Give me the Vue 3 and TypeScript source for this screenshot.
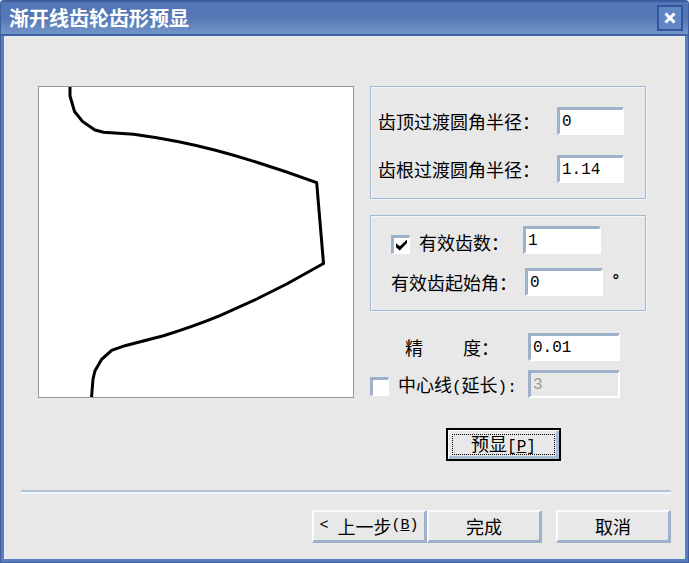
<script setup lang="ts">
import { ref } from 'vue'

const tipRadius = ref('0')
const rootRadius = ref('1.14')
const limitTeeth = ref(true)
const toothCount = ref('1')
const startAngle = ref('0')
const precision = ref('0.01')
const centerLine = ref(false)
const extension = ref('3')
</script>

<template>
  <main class="window">
    <header class="titlebar">
      <h1>渐开线齿轮齿形预显</h1>
      <button type="button" class="close" aria-label="关闭">
        <svg viewBox="0 0 12 12" width="12" height="12" aria-hidden="true">
          <path d="M1.5 1.5 L10.5 10.5 M10.5 1.5 L1.5 10.5" />
        </svg>
      </button>
    </header>

    <div class="body">
      <div class="content">
        <div class="preview">
          <svg viewBox="0 0 314 310" aria-hidden="true">
            <path
              d="M31 -1 V9 L35.5 24.5 L43.5 34.5 L56 43 L64.5 45.3 L94.5 47.3 Q137 53 177.5 63.5 Q226 76.5 277.7 95.7 L279.7 119.7 L284.5 176.5 L247.7 197 L217.7 212 L181 228.7 Q152 240.5 124.5 248.7 L86 258.7 L72.7 263.3 L62.7 272.3 L56 283.7 L54 292 L52.5 311"
            />
          </svg>
        </div>

        <form class="settings" @submit.prevent>
          <section class="group radii">
            <label for="tip">齿顶过渡圆角半径：</label>
            <input id="tip" v-model="tipRadius" type="text" class="field" />
            <label for="root">齿根过渡圆角半径：</label>
            <input id="root" v-model="rootRadius" type="text" class="field" />
          </section>

          <section class="group teeth">
            <div class="row count">
              <input id="limit" v-model="limitTeeth" type="checkbox" class="check" />
              <label for="limit">有效齿数：</label>
              <input v-model="toothCount" type="text" class="field" aria-label="有效齿数" />
            </div>
            <div class="row angle">
              <label for="angle">有效齿起始角：</label>
              <input id="angle" v-model="startAngle" type="text" class="field" />
              <span class="degree">°</span>
            </div>
          </section>

          <section class="options">
            <label for="precision" class="spread"><span>精</span><span>度：</span></label>
            <input id="precision" v-model="precision" type="text" class="field" />
            <div class="row">
              <input id="center" v-model="centerLine" type="checkbox" class="check" />
              <label for="center">中心线<span class="latin">(</span>延长<span class="latin">):</span></label>
            </div>
            <input v-model="extension" type="text" class="field" :disabled="!centerLine" aria-label="延长" />
          </section>

          <button type="button" class="button default">
            <span class="focus">预显<span class="latin">[<u>P</u>]</span></span>
          </button>
        </form>
      </div>

      <footer class="footer">
        <button type="button" class="button"><span class="latin">&lt; </span>上一步<span class="latin">(<u>B</u>)</span></button>
        <button type="button" class="button">完成</button>
        <button type="button" class="button cancel">取消</button>
      </footer>
    </div>
  </main>
</template>

<style>
body {
  background: #dbe9f8;
}
</style>

<style scoped>
* {
  box-sizing: border-box;
}

.window {
  display: flex;
  flex-direction: column;
  min-height: 100vh;
  border: 1px solid #3f5f9f;
  border-top: 2px solid #3c5c9c;
  border-radius: 4px 4px 0 0;
  padding: 0 3px 3px;
  background: #5b7fbd;
  color: #000;
  font: 18px/28px "Noto Sans CJK SC", sans-serif;
}

.titlebar {
  display: flex;
  align-items: center;
  justify-content: space-between;
  height: 34px;
  margin: 0 -3px;
  padding: 0 5px 0 8px;
  border-bottom: 2px solid #4262a4;
  background: linear-gradient(#5076b8, #5578b6 50%, #7296c8);
}

h1 {
  margin: 0;
  color: #fff;
  font-size: 20px;
  font-weight: 700;
  line-height: 28px;
}

.close {
  display: grid;
  place-items: center;
  width: 26px;
  height: 26px;
  padding: 0;
  border: 2px solid #34569c;
  background: #6086c4;
}

.close path {
  fill: none;
  stroke: #fff;
  stroke-width: 3;
}

.body {
  flex: 1;
  display: flex;
  flex-direction: column;
  padding: 49px 13px 15px 16px;
  border: 1px solid #e4ebfb;
  background: #e8e8e8;
}

.content {
  display: grid;
  grid-template-columns: minmax(0, 316fr) minmax(0, 276fr);
  align-items: start;
  gap: 16px;
  padding: 0 25px 0 17px;
}

.preview {
  border: 1px solid #969696;
  background: #fff;
}

.preview svg {
  display: block;
  width: 100%;
}

.preview path {
  fill: none;
  stroke: #000;
  stroke-width: 3;
}

.settings {
  display: flex;
  flex-direction: column;
}

.group {
  border: 1px solid #a3b9d2;
  box-shadow: inset 1px 1px #eef6ff, 1px 1px #eef6ff;
  margin-bottom: 16px;
}

.radii {
  display: grid;
  grid-template-columns: 1fr 67px;
  row-gap: 20px;
  padding: 20px 21px 15px 7px;
}

.teeth {
  display: flex;
  flex-direction: column;
  gap: 14px;
  padding: 10px 16px 14px 20px;
}

.row {
  display: flex;
  align-items: center;
}

label {
  white-space: nowrap;
}

.count label {
  padding: 4px 0 0 9px;
  line-height: 24px;
}

.count .check {
  margin-top: 8px;
}

.teeth .field {
  width: 78px;
  margin-left: 14px;
}

.angle .field {
  margin-left: 8px;
}

.field {
  width: 100%;
  min-width: 0;
  height: 28px;
  margin: 0;
  padding: 0 2px;
  border: 2px solid #fff;
  border-top: 3px solid #9fb1c8;
  border-left: 3px solid #9fb1c8;
  border-radius: 0;
  outline: 0;
  background: #fff;
  color: #000;
  font: 16px/20px "Liberation Mono", monospace;
}

.field:disabled {
  background: #e8e8e8;
  color: #999;
}

.check {
  appearance: none;
  display: grid;
  place-items: center;
  flex: none;
  width: 19px;
  height: 19px;
  margin: 0;
  border: 1px solid #fff;
  border-top: 3px solid #9fb1c8;
  border-left: 3px solid #9fb1c8;
  background: #fff;
}

.check:checked::before {
  content: "";
  width: 11px;
  height: 11px;
  background: #000;
  clip-path: polygon(0 35%, 35% 62%, 100% 0, 100% 32%, 35% 100%, 0 70%);
}

.degree {
  margin-left: 8px;
  font: 700 16px/24px "Liberation Mono", monospace;
}

.options {
  display: grid;
  grid-template-columns: 1fr 92px;
  row-gap: 9px;
  margin-top: 6px;
  padding-right: 26px;
}

.spread {
  display: flex;
  justify-content: space-between;
  padding: 0 29px 0 35px;
}

.options .row {
  gap: 9px;
}

.latin {
  font-family: "Liberation Mono", monospace;
  font-size: 16px;
}

.button {
  display: flex;
  align-items: center;
  justify-content: center;
  width: 115px;
  height: 33px;
  padding: 0;
  border: 2px solid #f8fbff;
  border-right: 3px solid #9fb1c8;
  border-bottom: 3px solid #9fb1c8;
  background: #e8e8e8;
  color: #000;
  font: inherit;
  line-height: 24px;
  white-space: pre;
}

.default {
  align-self: center;
  margin: 26px 0 0 -9px;
  padding: 2px;
  border: 2px solid #000;
  box-shadow: inset 1px 1px #fff, inset -3px -3px #a9bdd5;
}

.focus {
  width: 103px;
  height: 21px;
  border: 1px dotted #000;
  line-height: 16px;
}

.footer {
  display: flex;
  justify-content: flex-end;
  margin-top: auto;
  padding-top: 18px;
  border-top: 2px solid #b4c3d6;
  box-shadow: inset 0 2px #f1f7ff;
}

.footer .latin {
  font-size: 15px;
}

.cancel {
  margin-left: 14px;
}
</style>
